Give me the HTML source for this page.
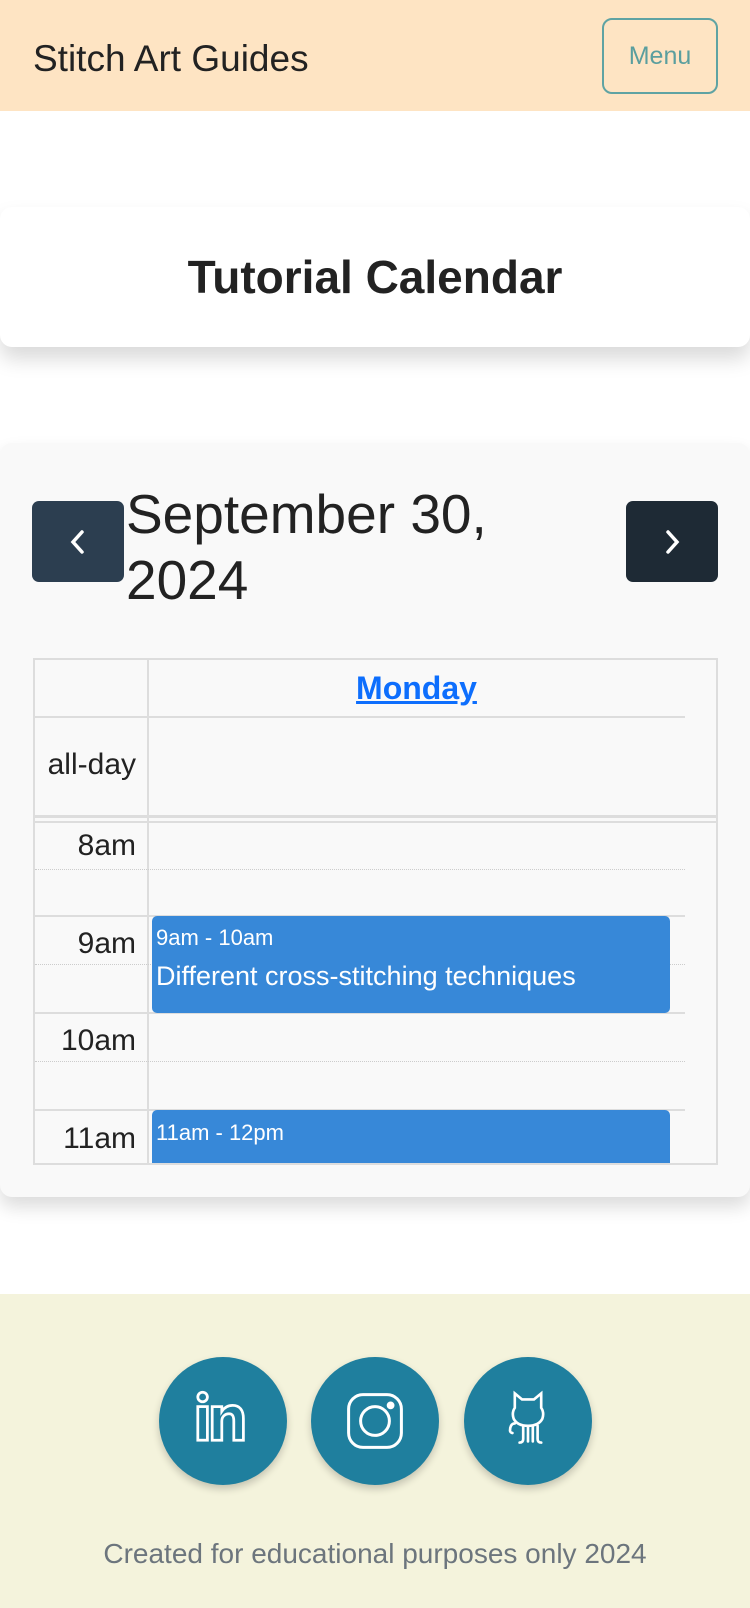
<!DOCTYPE html>
<html><head><meta charset="utf-8"><style>
*{box-sizing:border-box;margin:0;padding:0}
body{width:750px;height:1608px;background:#fff;font-family:"Liberation Sans","DejaVu Sans",sans-serif;color:#212529;position:relative;overflow:hidden}
.hdr{position:absolute;left:0;top:0;width:750px;height:111px;background:#fee4c3}
.brand{position:absolute;left:33px;top:38px;font-size:37px;color:#222}
.menu{position:absolute;left:602px;top:18px;width:116px;height:76px;border:2px solid #5fa3a3;border-radius:10px;color:#5a9e9e;font-size:25px;text-align:center;line-height:72px}
.card1{position:absolute;left:0;top:207px;width:750px;height:140px;background:#fff;border-radius:12px;box-shadow:0 12px 20px rgba(0,0,0,.15)}
.card1 h1{text-align:center;font-size:46px;font-weight:bold;line-height:140px;color:#222}
.card2{position:absolute;left:0;top:443px;width:750px;height:754px;background:#f9f9f9;border-radius:12px;box-shadow:0 10px 18px rgba(0,0,0,.14)}
.btn{position:absolute;top:58px;width:92px;height:81px;border-radius:7px}
.btn svg{position:absolute;left:32px;top:27px}
.date{position:absolute;left:126px;top:38px;font-size:55px;line-height:66px;color:#222;font-weight:500}
.tbl{position:absolute;left:33px;top:215px;width:685px;height:507px;border:2px solid #ddd;overflow:hidden;background:#f9f9f9}
.hl{position:absolute;background:#ddd;height:2px}
.vl{position:absolute;background:#ddd;width:2px}
.dl{position:absolute;height:0;border-top:1px dotted #ccc}
.tl{position:absolute;right:580px;font-size:30px;color:#222;text-align:right}
.ev{position:absolute;left:117px;width:518px;background:#3788d8;border-radius:5px;color:#fff}
.foot{position:absolute;left:0;top:1294px;width:750px;height:314px;background:#f4f3dc}
.c{position:absolute;top:63px;width:128px;height:128px;border-radius:50%;background:#1f7f9e;box-shadow:0 4px 8px rgba(0,0,0,.2)}
.c svg{position:absolute;left:28px;top:28px}
.ft{position:absolute;top:244px;width:750px;text-align:center;font-size:28px;color:#6c757d}
</style></head><body>
<div class="hdr"><div class="brand">Stitch Art Guides</div><div class="menu">Menu</div></div>
<div class="card1"><h1>Tutorial Calendar</h1></div>
<div class="card2">
 <div class="btn" style="left:32px;background:#2c3e50"><svg width="28" height="28" viewBox="0 0 28 28"><path d="M18 4 L9 14 L18 24" stroke="#fff" stroke-width="3.5" fill="none" stroke-linecap="round"/></svg></div>
 <div class="btn" style="left:626px;background:#1e2a35"><svg width="28" height="28" viewBox="0 0 28 28"><path d="M10 4 L19 14 L10 24" stroke="#fff" stroke-width="3.5" fill="none" stroke-linecap="round"/></svg></div>
 <div class="date">September 30,<br>2024</div>
 <div class="tbl">
  <div class="vl" style="left:112px;top:0;height:507px"></div>
  <div style="position:absolute;left:114px;width:535px;top:10px;text-align:center;font-size:32px;font-weight:bold;color:#0d6efd;text-decoration:underline">Monday</div>
  <div class="hl" style="left:0;top:56px;width:650px"></div>
  <div class="tl" style="top:88px">all-day</div>
  <div class="hl" style="left:0;top:155px;width:685px;height:3px"></div>
  <div class="hl" style="left:0;top:161px;width:685px"></div>
  <div class="tl" style="top:169px">8am</div>
  <div class="dl" style="left:0;top:209px;width:650px"></div>
  <div class="hl" style="left:0;top:255px;width:650px"></div>
  <div class="tl" style="top:267px">9am</div>
  <div class="dl" style="left:0;top:304px;width:650px"></div>
  <div class="hl" style="left:0;top:352px;width:650px"></div>
  <div class="tl" style="top:364px">10am</div>
  <div class="dl" style="left:0;top:401px;width:650px"></div>
  <div class="hl" style="left:0;top:449px;width:650px"></div>
  <div class="tl" style="top:462px">11am</div>
  <div class="ev" style="top:256px;height:97px"><div style="position:absolute;left:4px;top:9px;font-size:22px">9am - 10am</div><div style="position:absolute;left:4px;top:45px;font-size:27px">Different cross-stitching techniques</div></div>
  <div class="ev" style="top:450px;height:80px"><div style="position:absolute;left:4px;top:10px;font-size:22px">11am - 12pm</div></div>
 </div>
</div>
<div class="foot">
 <div class="c" style="left:159px"><svg width="72" height="72" viewBox="0 0 60 60" fill="none" stroke="#fff" stroke-width="2.3"><circle cx="13" cy="10" r="4"/><rect x="9" y="18" width="8" height="28"/><path d="M21 18h8v4c2-3 5-5 9-5c6 0 9 4 9 11v18h-8V30c0-4-1-6-4-6s-6 2-6 6v16h-8z"/></svg></div>
 <div class="c" style="left:311px"><svg width="72" height="72" viewBox="0 0 60 60" fill="none" stroke="#fff" stroke-width="2.5"><rect x="8" y="8" width="44" height="44" rx="12"/><circle cx="30" cy="30" r="12"/><circle cx="43" cy="17" r="2" fill="#fff"/></svg></div>
 <div class="c" style="left:464px"><svg width="72" height="72" viewBox="0 0 60 60" fill="none" stroke="#fff" stroke-width="2.2" stroke-linecap="round"><path d="M19 7l6 5h10l6-5v12c2 3 2 6 1 9c-2 4-6 6-12 6s-10-2-12-6c-1-3-1-6 1-9z"/><path d="M19 32c-3 0-4 3-4 6c0 1 1 2 2 2"/><path d="M26 34v11c0 2-1 3-3 3M30 35v12M34 35v12M38 34v11c0 2 1 3 3 3"/></svg></div>
 <div class="ft">Created for educational purposes only 2024</div>
</div>
</body></html>
